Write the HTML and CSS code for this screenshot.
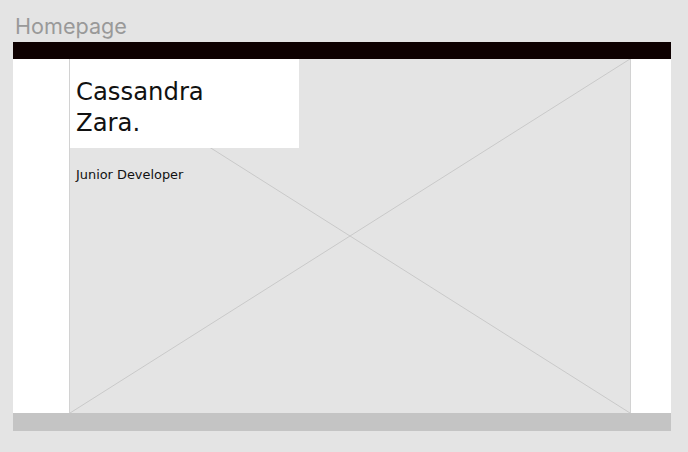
FILE: index.html
```html
<!DOCTYPE html>
<html>
<head>
<meta charset="utf-8">
<link rel="stylesheet" href="styles.css">
</head>
<body>
<div class="page-title">Homepage</div>
<div class="frame">
  <div class="topbar"></div>
  <div class="main">
    <div class="hero">
      <svg class="hero-lines" viewBox="0 0 100 100" preserveAspectRatio="none">
        <line x1="0" y1="0" x2="100" y2="100" vector-effect="non-scaling-stroke"/>
        <line x1="0" y1="100" x2="100" y2="0" vector-effect="non-scaling-stroke"/>
      </svg>
      <div class="name-card">
        <h1 class="name">Cassandra<br>Zara.</h1>
      </div>
      <p class="role">Junior Developer</p>
    </div>
  </div>
  <div class="footer"></div>
</div>
</body>
</html>
```
FILE: styles.css
```css
html, body {
  margin: 0;
  padding: 0;
  background: #e4e4e4;
}
body {
  width: 688px;
  height: 452px;
  overflow: hidden;
}
.page-title {
  font-family: Inter, "Liberation Sans", sans-serif;
  font-size: 21.6px;
  line-height: 26px;
  color: #999999;
  padding: 13px 0 0 15px;
  box-sizing: border-box;
  height: 42px;
}
.frame {
  margin-left: 13px;
  width: 658px;
  display: flex;
  flex-direction: column;
}
.topbar {
  height: 17px;
  background: #0e0101;
}
.main {
  height: 354px;
  background: #ffffff;
  display: flex;
  padding-left: 56px;
}
.hero {
  position: relative;
  width: 562px;
  height: 354px;
  background: #e4e4e4;
  box-sizing: border-box;
  border-left: 1px solid #d2d2d2;
  border-right: 1px solid #d2d2d2;
}
.hero-lines {
  position: absolute;
  left: 0;
  top: 0;
  width: 100%;
  height: 100%;
}
.hero-lines line {
  stroke: #c9c9c9;
  stroke-width: 1;
}
.name-card {
  position: absolute;
  left: 0;
  top: 0;
  width: 229px;
  height: 89px;
  background: #ffffff;
  box-sizing: border-box;
  padding: 17px 0 0 6px;
}
.name {
  margin: 0;
  font-family: "DejaVu Sans", sans-serif;
  font-weight: normal;
  font-size: 24.3px;
  line-height: 31px;
  color: #111111;
}
.role {
  position: absolute;
  left: 6px;
  top: 108px;
  margin: 0;
  font-family: "DejaVu Sans", sans-serif;
  font-size: 12.9px;
  line-height: 16px;
  color: #111111;
}
.footer {
  height: 18px;
  background: #c4c4c4;
}
```
